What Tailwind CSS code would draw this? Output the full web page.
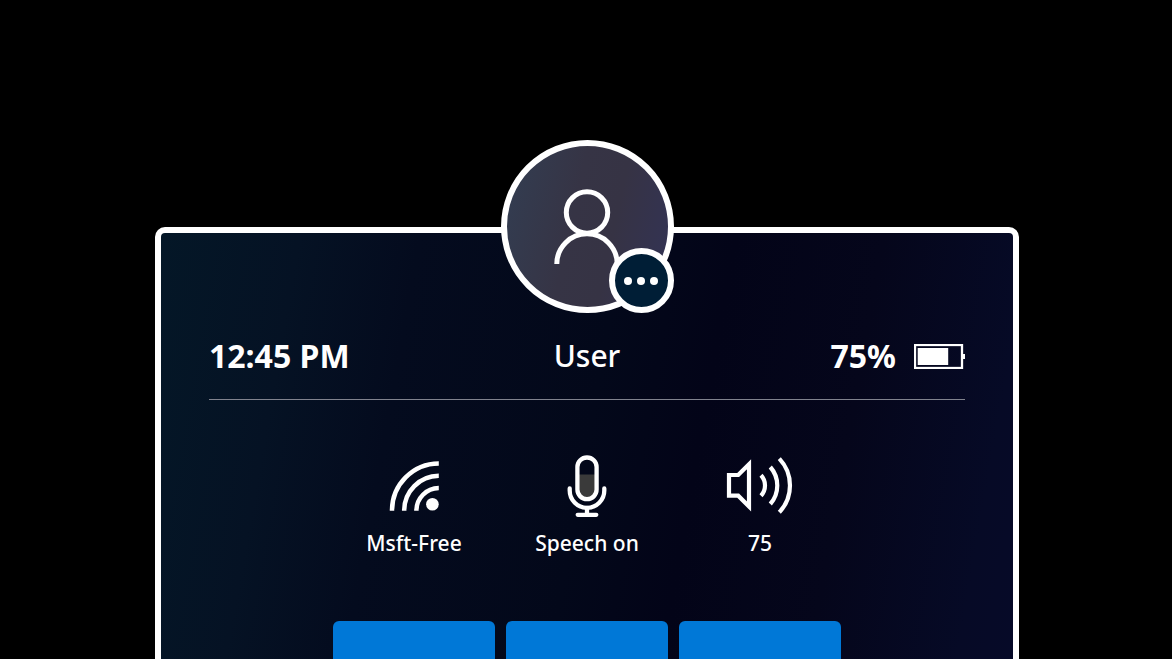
<!DOCTYPE html>
<html lang="en">
<head>
<meta charset="utf-8">
<meta name="viewport" content="width=device-width, initial-scale=1">
<title>Home</title>
<script src="https://cdn.jsdelivr.net/npm/@tailwindcss/browser@4"></script>
</head>
<body class="bg-black text-white font-['Noto_Sans','Open_Sans',sans-serif]">
<main class="flex min-h-screen flex-col pl-[2px] pt-[227px]">
  <section class="mx-auto flex w-full max-w-[864px] flex-1 flex-col rounded-t-[10px] border-[6px] border-b-0 border-white bg-[linear-gradient(100deg,#041727_0%,#051224_15%,#040b1e_28%,#03081a_50%,#030418_62%,#05061b_78%,#060a26_94%,#060a28_100%)] px-12">
    <header>
      <div class="relative mx-auto -mt-[93px] size-[173px]">
        <svg class="size-full" viewBox="0 0 173 173" fill="none" stroke="#fff" role="img" aria-label="User picture">
          <defs>
            <linearGradient id="face" x1="0" y1="0.4" x2="1" y2="0.62">
              <stop offset="0" stop-color="#333c50"/>
              <stop offset="0.4" stop-color="#363445"/>
              <stop offset="0.65" stop-color="#363344"/>
              <stop offset="1" stop-color="#333353"/>
            </linearGradient>
          </defs>
          <circle cx="86.5" cy="86.5" r="83.5" fill="url(#face)" stroke-width="6"/>
          <circle cx="86" cy="72.5" r="20.7" stroke-width="5"/>
          <path d="M55.8 124A30.2 30.2 0 0 1 116.200 124" stroke-width="5"/>
        </svg>
        <button type="button" aria-label="More options" class="absolute bottom-0 right-0 flex size-[65px] items-center justify-center gap-[5px] rounded-full border-[6px] border-white bg-[#001e36]">
          <span class="size-2 rounded-full bg-white"></span>
          <span class="size-2 rounded-full bg-white"></span>
          <span class="size-2 rounded-full bg-white"></span>
        </button>
      </div>
      <div class="grid grid-cols-3 items-center border-b border-[#81838e] py-[19px] text-[32px] leading-[48px]">
        <time class="font-bold">12:45 PM</time>
        <h1 class="text-center text-[30px] font-medium">User</h1>
        <div class="flex items-center justify-end gap-[18px] font-bold">
          <span>75%</span>
          <svg class="h-[25px] w-[51px]" viewBox="0 0 51 25" fill="none" role="img" aria-label="Battery">
            <rect x="1" y="1" width="47" height="23" stroke="#fff" stroke-width="2.300"/>
            <rect x="3.700" y="4" width="30.500" height="17" fill="#fff"/>
            <rect x="49" y="10" width="2" height="5" fill="#fff"/>
          </svg>
        </div>
      </div>
    </header>
    <div class="mx-auto grid w-full max-w-[508px] grid-cols-3 gap-[11px] pt-[54px] text-[21px] font-medium leading-[28px]">
      <div class="flex flex-col items-center gap-[11px]">
        <svg class="h-16 w-[72px]" viewBox="0 0 72 64" fill="none" stroke="#fff" stroke-width="4.500" aria-hidden="true">
          <path d="M14 56.700A47 47 0 0 1 60.800 9.500M26.200 56.700A34.800 34.800 0 0 1 60.800 21.800M38.400 56.700A22.600 22.600 0 0 1 60.800 34.100"/>
          <circle cx="54.400" cy="50.200" r="6.300" fill="#fff" stroke="none"/>
        </svg>
        <span>Msft-Free</span>
      </div>
      <div class="flex flex-col items-center gap-[11px]">
        <svg class="h-16 w-[72px]" viewBox="0 0 72 64" fill="none" stroke="#fff" stroke-width="4.300" stroke-linecap="round" aria-hidden="true">
          <path d="M26.500 20.500H45.500V35.500A9.500 9.500 0 0 1 26.500 35.500Z" fill="#3a3a3a" stroke="none"/>
          <rect x="26.400" y="3.500" width="19.200" height="41.700" rx="9.600"/>
          <path d="M18.700 34.500V36.500A17.300 17.300 0 0 0 53.300 36.500V34.500"/>
          <path d="M36 54V60M26.700 60.800H45.300"/>
        </svg>
        <span>Speech on</span>
      </div>
      <div class="flex flex-col items-center gap-[11px]">
        <svg class="h-16 w-[72px]" viewBox="0 0 72 64" fill="none" stroke="#fff" stroke-width="4.200" aria-hidden="true">
          <path d="M5 21H14.200L25 10.200V52.500L14.200 41.700H5Z" stroke-miterlimit="3"/>
          <path d="M37 21.300A15 15 0 0 1 37 41.700M46.300 13A28 28 0 0 1 46.300 50M55.300 4.600A39 39 0 0 1 55.300 58.200"/>
        </svg>
        <span>75</span>
      </div>
    </div>
    <div class="mx-auto grid w-full max-w-[508px] flex-1 grid-cols-3 gap-[11px] pt-[64px]">
      <button type="button" aria-label="First tile" class="min-h-[38px] rounded-t-[6px] bg-[#0078d7]"></button>
      <button type="button" aria-label="Second tile" class="min-h-[38px] rounded-t-[6px] bg-[#0078d7]"></button>
      <button type="button" aria-label="Third tile" class="min-h-[38px] rounded-t-[6px] bg-[#0078d7]"></button>
    </div>
  </section>
</main>
</body>
</html>
